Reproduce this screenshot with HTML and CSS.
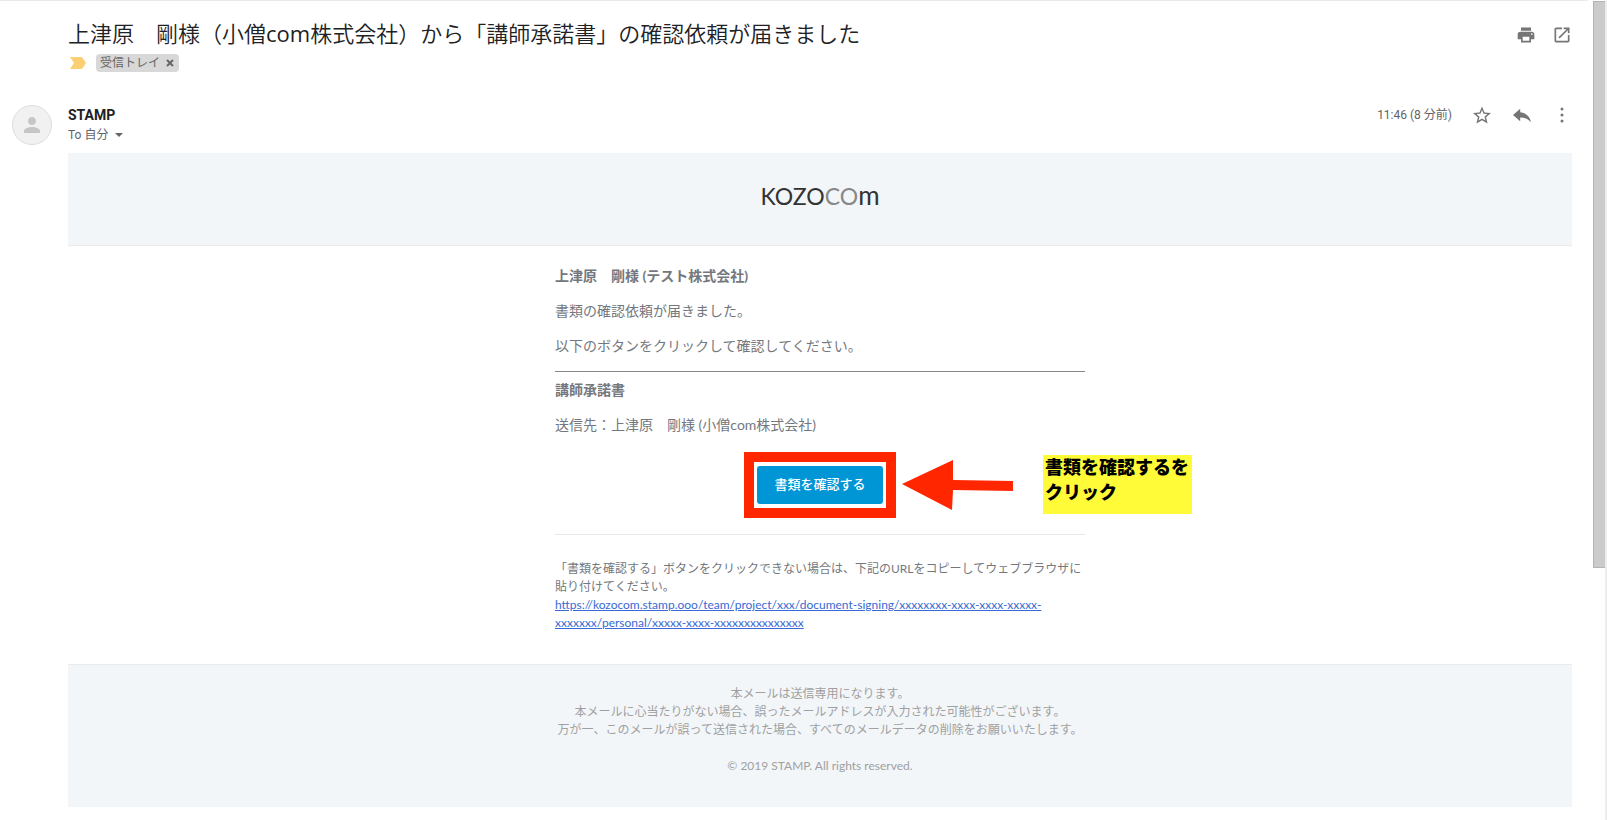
FILE: index.html
```html
<!DOCTYPE html>
<html lang="ja">
<head>
<meta charset="utf-8">
<title>「講師承諾書」の確認依頼が届きました</title>
<link rel="stylesheet" href="styles.css">
</head>
<body>
<div class="window">
  <main class="mail">
    <header class="subject">
      <div class="subject-main">
        <h1 class="title">上津原　剛様（小僧<span class="latin">com</span>株式会社）から「講師承諾書」の確認依頼が届きました</h1>
        <div class="labels">
          <svg class="marker" viewBox="0 0 16 12" aria-hidden="true"><path d="M0 0h11q1 0 1.600.800L16 6l-3.400 5.200Q12 12 11 12H0l4-6z"/></svg>
          <span class="label">受信トレイ<button class="label-remove" type="button" aria-label="ラベルを削除"><svg viewBox="0 0 8 8"><path d="M1 1l6 6M7 1L1 7"/></svg></button></span>
        </div>
      </div>
      <div class="subject-tools">
        <button class="icon" type="button" aria-label="印刷"><svg viewBox="0 0 24 24"><path d="M19 8H5c-1.660 0-3 1.340-3 3v6h4v4h12v-4h4v-6c0-1.660-1.340-3-3-3zm-3 11H8v-5h8v5zm3-7c-.550 0-1-.450-1-1s.450-1 1-1 1 .450 1 1-.450 1-1 1zm-1-9H6v4h12V3z"/></svg></button>
        <button class="icon" type="button" aria-label="新しいウィンドウ"><svg viewBox="0 0 24 24"><path d="M19 19H5V5h7V3H5c-1.110 0-2 .900-2 2v14c0 1.100.890 2 2 2h14c1.100 0 2-.900 2-2v-7h-2v7zM14 3v2h3.590l-9.830 9.830 1.410 1.410L19 6.410V10h2V3h-7z"/></svg></button>
      </div>
    </header>

    <section class="sender">
      <div class="avatar"><svg viewBox="0 0 24 24" aria-hidden="true"><path d="M12 12c2.210 0 4-1.790 4-4s-1.790-4-4-4-4 1.790-4 4 1.790 4 4 4zm0 2c-2.670 0-8 1.340-8 4v2h16v-2c0-2.660-5.330-4-8-4z"/></svg></div>
      <div class="sender-info">
        <div class="sender-name">STAMP</div>
        <button class="recipient" type="button">To 自分<span class="caret"></span></button>
      </div>
      <div class="sender-tools">
        <time class="time">11:46 (8 分前)</time>
        <button class="icon" type="button" aria-label="スター"><svg viewBox="0 0 24 24"><path d="M24 9.240l-8.630-.740L12 .500 8.630 8.500 0 9.240l6.550 5.680L4.590 23.360 12 18.890l7.410 4.470-1.960-8.440L24 9.240zM12 16.640l-4.510 2.720 1.200-5.130-3.990-3.450 5.250-.450L12 5.480l2.050 4.850 5.250.450-3.990 3.450 1.200 5.130L12 16.640z"/></svg></button>
        <button class="icon" type="button" aria-label="返信"><svg viewBox="2 2 20 20"><path d="M10 9V5l-8 7 8 7v-4.100c5 0 9 1.600 12 5.100-1-5-4-10-12-11z"/></svg></button>
        <button class="icon" type="button" aria-label="その他"><svg viewBox="0 0 24 24"><circle cx="12" cy="4" r="2"/><circle cx="12" cy="12" r="2"/><circle cx="12" cy="20" r="2"/></svg></button>
      </div>
    </section>

    <article class="message">
      <div class="brand">
        <svg class="logo" viewBox="0 0 128 48" role="img" aria-label="kozocom">
          <text x="64" y="34" text-anchor="middle">KOZO<tspan class="pale">CO</tspan><tspan class="tall">m</tspan></text>
        </svg>
      </div>
      <div class="body">
        <p class="strong">上津原　剛様 (テスト株式会社)</p>
        <p>書類の確認依頼が届きました。</p>
        <p>以下のボタンをクリックして確認してください。</p>
        <hr class="rule">
        <p class="strong">講師承諾書</p>
        <p>送信先：上津原　剛様 (小僧com株式会社)</p>
        <div class="action">
          <div class="highlight">
            <button class="confirm" type="button">書類を確認する</button>
            <svg class="arrow" viewBox="0 0 112 52" aria-hidden="true"><path d="M0 25L51 1v20l60 1v10l-60-1-1 20z"/></svg>
            <div class="note">書類を確認するを<br>クリック</div>
          </div>
        </div>
        <div class="fallback">
          「書類を確認する」ボタンをクリックできない場合は、下記のURLをコピーしてウェブブラウザに貼り付けてください。<br>
          <a href="#">https://kozocom.stamp.ooo/team/project/xxx/document-signing/xxxxxxxx-xxxx-xxxx-xxxxx-<wbr>xxxxxxx/personal/xxxxx-xxxx-xxxxxxxxxxxxxxx</a>
        </div>
      </div>
      <footer class="foot">
        <p>本メールは送信専用になります。<br>本メールに心当たりがない場合、誤ったメールアドレスが入力された可能性がございます。<br>万が一、このメールが誤って送信された場合、すべてのメールデータの削除をお願いいたします。</p>
        <p>© 2019 STAMP. All rights reserved.</p>
      </footer>
    </article>
  </main>
  <div class="scroll"><div class="thumb"></div></div>
</div>
</body>
</html>
```

FILE: styles.css
```css
* { box-sizing: border-box; }
body {
  margin: 0;
  background: #fff;
  color: #202124;
  font-family: Roboto, "Noto Sans CJK JP", sans-serif;
}
button {
  margin: 0;
  padding: 0;
  border: 0;
  background: none;
  font: inherit;
  color: inherit;
}
p, h1 { margin: 0; }
svg { display: block; }

.window { display: flex; min-height: 100vh; }
.mail {
  flex: 1;
  min-width: 0;
  border-top: 1px solid #e8eaed;
  padding: 19px 16px 12px 12px;
}
.scroll {
  width: 19px;
  padding: 1px 0 0 5px;
  border-right: 2px solid #ededed;
}
.thumb {
  height: 567px;
  background: #cbcbcb;
  border: 1px solid #b3b3b3;
  border-right: 0;
}

.subject {
  display: flex;
  justify-content: space-between;
  padding-left: 56px;
}
.title {
  font-family: "Open Sans", "Noto Sans CJK JP", sans-serif;
  font-size: 22px;
  line-height: 26px;
  font-weight: 350;
}
.latin { font-weight: 400; }
.labels { display: flex; align-items: center; gap: 10px; margin-top: 8px; padding-left: 2px; }
.marker { width: 16px; height: 12px; fill: #fbd075; }
.label {
  display: flex;
  align-items: center;
  gap: 6px;
  height: 18px;
  padding: 0 5px 0 4px;
  border-radius: 4px;
  background: #d8d8d8;
  color: #666;
  font-size: 12px;
  line-height: 18px;
}
.label-remove svg { width: 8px; height: 8px; stroke: #666; stroke-width: 2; }
.subject-tools { display: flex; gap: 16px; padding-top: 5px; }
.icon { width: 20px; height: 20px; }
.icon svg { width: 20px; height: 20px; fill: #757575; }
.sender-tools .icon svg { width: 18px; height: 18px; margin: 1px; }

.sender { display: flex; margin-top: 33px; height: 48px; }
.avatar {
  display: grid;
  place-items: center;
  width: 40px;
  height: 40px;
  margin-right: 16px;
  border: 1px solid #ddd;
  border-radius: 50%;
  background: #f1f1f1;
}
.avatar svg { width: 24px; height: 24px; fill: #c6c6c6; }
.sender-info { flex: 1; }
.sender-name { font-size: 14px; line-height: 20px; font-weight: 700; }
.recipient {
  display: flex;
  align-items: center;
  gap: 7px;
  color: #5f6368;
  font-size: 12px;
  line-height: 20px;
}
.caret { border: 4px solid transparent; border-top-color: #666; border-bottom: 0; }
.sender-tools { display: flex; gap: 20px; height: 20px; line-height: 20px; }
.time { color: #5f6368; font-size: 12px; }

.message {
  margin-left: 56px;
  font-family: Lato, "Noto Sans CJK JP", sans-serif;
  color: #74787e;
}
.brand {
  display: flex;
  justify-content: center;
  height: 93px;
  padding-top: 18px;
  border-bottom: 1px solid #e8eaec;
  background: #f2f6f9;
}
.logo { width: 128px; height: 48px; fill: #333; font-size: 23px; font-weight: 400; }
.logo .pale { fill: #888; }
.logo .tall { font-size: 26px; }

.body {
  max-width: 530px;
  margin: 0 auto;
  padding: 19px 0 32px;
  font-size: 14px;
  line-height: 21px;
}
.body p { margin-bottom: 14px; }
.strong { font-weight: 700; }
.rule {
  height: 1px;
  margin: 15px 0 7px;
  border: 0;
  background: #888;
}
.action {
  display: flex;
  justify-content: center;
  padding: 3px 0 16px;
  border-bottom: 1px solid #e8eaec;
}
.highlight {
  position: relative;
  padding: 4px 3px;
  border: 10px solid #ff2600;
}
.confirm {
  display: block;
  width: 126px;
  height: 38px;
  padding-bottom: 2px;
  border-radius: 3px;
  background: #0095d5;
  color: #fff;
  font-size: 13px;
  font-weight: 500;
}
.arrow {
  position: absolute;
  left: 148px;
  top: -3px;
  width: 112px;
  height: 52px;
  fill: #ff2600;
}
.note {
  position: absolute;
  left: 289px;
  top: -7px;
  width: 149px;
  height: 59px;
  padding-left: 2px;
  background: #fffb38;
  color: #000;
  font-size: 18px;
  line-height: 25px;
  font-weight: 900;
  white-space: nowrap;
}
.fallback { padding-top: 25px; font-size: 12px; line-height: 18px; }
.fallback a { color: #3869d4; }

.foot {
  display: grid;
  gap: 18px;
  padding: 20px 0 32px;
  border-top: 1px solid #e8eaec;
  background: #f2f6f9;
  color: #a0a0a0;
  font-size: 12px;
  line-height: 18px;
  text-align: center;
}
```
